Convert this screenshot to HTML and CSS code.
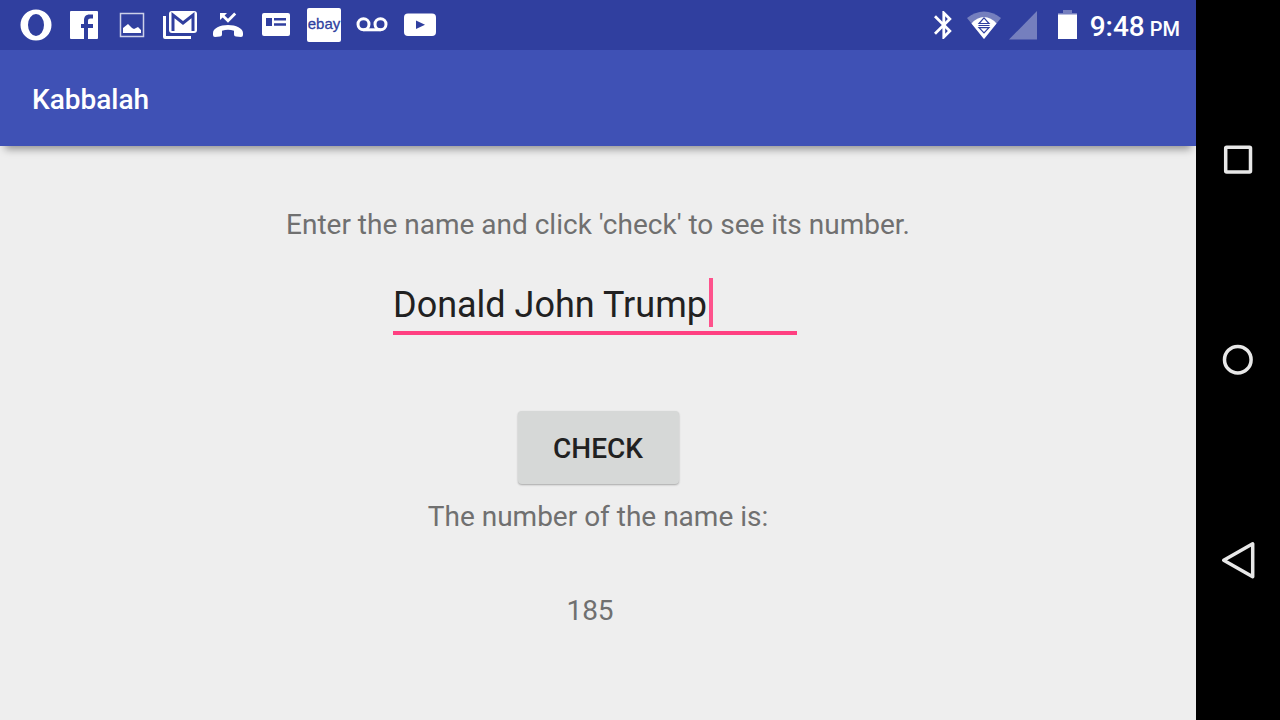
FILE: index.html
```html
<!DOCTYPE html>
<html lang="en">
<head>
    <meta charset="UTF-8">
    <title>Kabbalah</title>
    <link rel="stylesheet" href="styles.css">
</head>
<body>
    <div class="screen">
        <div class="status-bar">
            <div class="notifications">
                <svg class="icon" viewBox="0 0 48 50">
                    <path fill-rule="evenodd" d="M24 9.500a15.500 15.500 0 1 0 0 31a15.500 15.500 0 1 0 0-31zM24 14a8 11 0 1 1 0 22a8 11 0 1 1 0-22z"/>
                </svg>
                <svg class="icon" viewBox="0 0 48 50">
                    <rect x="10" y="11" width="28" height="28" rx="1"/>
                    <path class="cut" d="M24 39V28h-3v-4h3v-3.500c0-4 2-6 5.500-6H33v4h-2.500c-1.700 0-2.500.8-2.500 2.500v3h5v4h-5v11z"/>
                </svg>
                <svg class="icon" viewBox="0 0 48 50">
                    <rect class="line thin" x="12.500" y="13.500" width="23" height="23"/>
                    <path d="M15 33v-5l5-4 4 4 2 1 4-2 3 3v3z"/>
                </svg>
                <svg class="icon" viewBox="0 0 48 50">
                    <path d="M7 16h3v20h25v3H9q-2 0-2-2z"/>
                    <rect x="13" y="11" width="28" height="22" rx="3"/>
                    <path class="cut-line" d="M17 31V15l10 8 10-8v16"/>
                </svg>
                <svg class="icon" viewBox="0 0 48 50">
                    <path d="M9 33c0-4.500 7-8 15-8s15 3.500 15 8v2q0 2-2 2l-5-.5q-2 0-2-2v-3.700c-4-1.300-8-1.300-12 0v3.700q0 2-2 2l-5 .5q-2 0-2-2z"/>
                    <path d="M16 13h7l-2.400 2.400 3.400 3.300 6.200-6.200 2 2-8.200 8.200-5.300-5.200L16 20z"/>
                </svg>
                <svg class="icon" viewBox="0 0 48 50">
                    <rect x="10" y="13" width="28" height="23" rx="2"/>
                    <path class="cut" d="M14 18h6v8h-6zM22 18h12v2.500H22zM22 23.200h12v2.500H22z"/>
                </svg>
                <svg class="icon" viewBox="0 0 48 50">
                    <rect x="7" y="8" width="34" height="34" rx="2"/>
                    <text class="ebay" x="24" y="29" text-anchor="middle">ebay</text>
                </svg>
                <svg class="icon" viewBox="0 0 48 50">
                    <g class="line">
                        <circle cx="15.500" cy="24.300" r="5.500"/>
                        <circle cx="32.500" cy="24.300" r="5.500"/>
                        <path d="M15.500 29.800h17"/>
                    </g>
                </svg>
                <svg class="icon" viewBox="0 0 48 50">
                    <rect x="8" y="13.500" width="32" height="22.500" rx="4"/>
                    <path class="cut" d="M20 20.500v8.500l9-4.300z"/>
                </svg>
            </div>
            <div class="system">
                <svg class="bluetooth" viewBox="0 0 20 50">
                    <path transform="translate(-6 8.200) scale(1.400)" d="M17.710 7.710L12 2h-1v7.590L6.410 5 5 6.410 10.590 12 5 17.590 6.410 19 11 14.410V22h1l5.710-5.710-4.300-4.290zM13 5.830l1.880 1.880L13 9.590zM14.880 16.290L13 18.170v-3.760z"/>
                </svg>
                <svg class="wifi" viewBox="0 0 34 50">
                    <path class="dim" d="M17 39L0 18Q8 11.500 17 11.500T34 18z"/>
                    <path d="M17 39L4.500 23.500Q10 17 17 17T29.500 23.500z"/>
                    <path class="cut-thin" d="M17 17.800l5 5.700H12zM11.500 25.500h11M12 27.700h10L17 33z"/>
                </svg>
                <svg class="signal" viewBox="0 0 28 50">
                    <path class="dim" d="M0 39.500h28V11z"/>
                </svg>
                <svg class="battery" viewBox="0 0 19 50">
                    <path class="dim" d="M5 10h9v3h5v2H0v-2h5z"/>
                    <path d="M0 14.500h19V39H0z"/>
                </svg>
                <span class="clock">9:48 <small>PM</small></span>
            </div>
        </div>

        <header class="app-bar">
            <h1>Kabbalah</h1>
        </header>

        <main>
            <label for="name">Enter the name and click 'check' to see its number.</label>
            <div class="field">
                <input type="text" id="name" value="Donald John Trump" autocomplete="off" spellcheck="false">
                <span class="caret"></span>
            </div>
            <button type="button" id="check">CHECK</button>
            <p>The number of the name is:</p>
            <output id="result" for="name">185</output>
        </main>
    </div>

    <nav class="nav-bar">
        <button type="button" aria-label="Recent apps">
            <svg viewBox="0 0 40 40"><rect x="7.700" y="7.200" width="24.800" height="24.800" rx="1"/></svg>
        </button>
        <button type="button" aria-label="Home">
            <svg viewBox="0 0 40 40"><circle cx="19.800" cy="19.700" r="13.300"/></svg>
        </button>
        <button type="button" aria-label="Back">
            <svg viewBox="0 0 40 40"><path d="M5.700 20.300L34.700 3.800v33z"/></svg>
        </button>
    </nav>
</body>
</html>
```

FILE: styles.css
```css
* {
    box-sizing: border-box;
}
body {
    margin: 0;
    min-height: 100vh;
    display: flex;
    font-family: Roboto, sans-serif;
    font-size: 28px;
    line-height: 32px;
    color: #707070;
    background: #eeeeee;
}
.screen {
    flex: 1;
    display: flex;
    flex-direction: column;
    overflow: hidden;
}

/* status bar */
.status-bar {
    height: 50px;
    padding: 0 16px 0 12px;
    display: flex;
    justify-content: space-between;
    background: #303f9f;
    color: #fff;
}
.status-bar svg {
    height: 50px;
    fill: #fff;
}
.notifications,
.system {
    display: flex;
}
.icon {
    width: 48px;
}
.status-bar .cut {
    fill: #303f9f;
}
.status-bar .line {
    fill: none;
    stroke: #fff;
    stroke-width: 3;
}
.status-bar .thin {
    stroke: #ccd0e8;
    stroke-width: 1.5;
}
.cut-line {
    fill: none;
    stroke: #303f9f;
    stroke-width: 3;
}
.cut-thin {
    fill: none;
    stroke: #303f9f;
    stroke-width: 1.2;
}
.dim {
    fill: #757fbe;
}
.ebay {
    font-family: "Liberation Sans", Arial, sans-serif;
    font-size: 15px;
    fill: #303f9f;
    stroke: #303f9f;
    stroke-width: 0.3;
}
.bluetooth {
    width: 20px;
    margin-right: 14px;
}
.wifi {
    width: 34px;
    margin-right: 8px;
}
.signal {
    width: 28px;
    margin-right: 21px;
}
.battery {
    width: 19px;
    margin-right: 13px;
}
.clock {
    font-weight: 500;
    line-height: 54px;
    white-space: nowrap;
}
.clock small {
    font-size: 20px;
    margin-left: -2px;
}

/* app bar */
.app-bar {
    height: 96px;
    padding: 4px 32px 0;
    display: flex;
    align-items: center;
    background: #3f51b5;
    color: #fff;
    box-shadow: 0 8px 8px -5px rgba(0, 0, 0, 0.4);
}
h1 {
    margin: 0;
    font-size: 28px;
    font-weight: 500;
}

/* form */
main {
    flex: 1;
    padding-top: 63px;
    display: flex;
    flex-direction: column;
    align-items: center;
}
.field {
    position: relative;
    width: 404px;
    margin: 37px 6px 76px 0;
}
.field input {
    display: block;
    width: 100%;
    height: 57px;
    padding: 0;
    border: none;
    border-bottom: 4px solid #ff4081;
    background: none;
    font-family: inherit;
    font-size: 36px;
    color: #212121;
    outline: none;
}
.caret {
    position: absolute;
    left: 316px;
    top: 0;
    width: 4px;
    height: 49px;
    background: #ff4081;
    opacity: 0.9;
}
main button {
    width: 161px;
    height: 73px;
    padding: 2px 0 0;
    border: none;
    border-radius: 4px;
    background: #d6d8d7;
    box-shadow: 0 1px 2px rgba(0, 0, 0, 0.3);
    font-family: inherit;
    font-size: 28px;
    font-weight: 500;
    color: #212121;
}
main p {
    margin: 17px 0 62px;
}
output {
    margin-right: 16px;
}

/* navigation bar */
.nav-bar {
    width: 84px;
    padding: 60px 0;
    display: flex;
    flex-direction: column;
    justify-content: space-around;
    background: #000;
}
.nav-bar button {
    height: 40px;
    padding: 0;
    border: none;
    background: none;
}
.nav-bar svg {
    display: block;
    width: 40px;
    height: 40px;
    margin: 0 auto;
    fill: none;
    stroke: #e8e8e8;
    stroke-width: 3.5;
    stroke-linejoin: round;
}
```
